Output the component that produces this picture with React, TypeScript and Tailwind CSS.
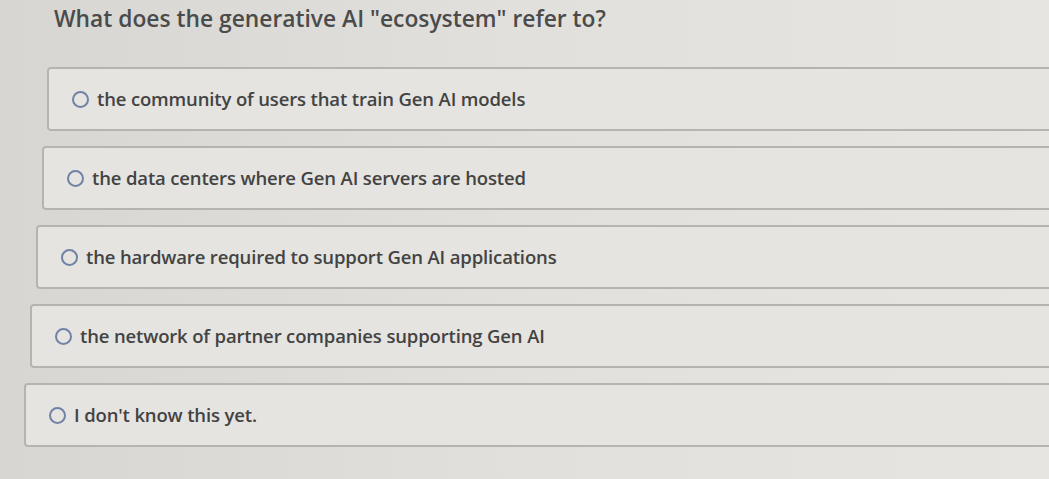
const options = [
  { text: 'the community of users that train Gen AI models', indent: 'ml-[47px]' },
  { text: 'the data centers where Gen AI servers are hosted', indent: 'ml-[42px]' },
  { text: 'the hardware required to support Gen AI applications', indent: 'ml-[36px]' },
  { text: 'the network of partner companies supporting Gen AI', indent: 'ml-[30px]' },
  { text: "I don't know this yet.", indent: 'ml-[24px]' },
];

function Radio() {
  return <span className="inline-block h-[17px] w-[17px] shrink-0 rounded-full border-2 border-[#7083a6]" />;
}

export default function App() {
  return (
    <div className="h-[479px] w-[1049px] overflow-hidden bg-gradient-to-r from-[#d7d6d2] via-[#e1e0dc] to-[#e6e5e1] font-['Open_Sans',sans-serif]">
      <h1 className="ml-[54px] pt-[4px] text-[22.8px] leading-[30px] font-semibold text-[#4b4b4b]">
        What does the generative AI "ecosystem" refer to?
      </h1>
      <div className="mt-[33px] flex flex-col gap-[15px]">
        {options.map((o) => (
          <div
            key={o.text}
            className={`${o.indent} flex h-[64px] w-[1100px] items-center gap-[8px] rounded-[4px] border-2 border-[#b4b4b2] bg-[#e5e4e0] pl-[23px]`}
          >
            <Radio />
            <span className="text-[18.5px] font-semibold tracking-[-0.15px] text-[#434343]">{o.text}</span>
          </div>
        ))}
      </div>
    </div>
  );
}
